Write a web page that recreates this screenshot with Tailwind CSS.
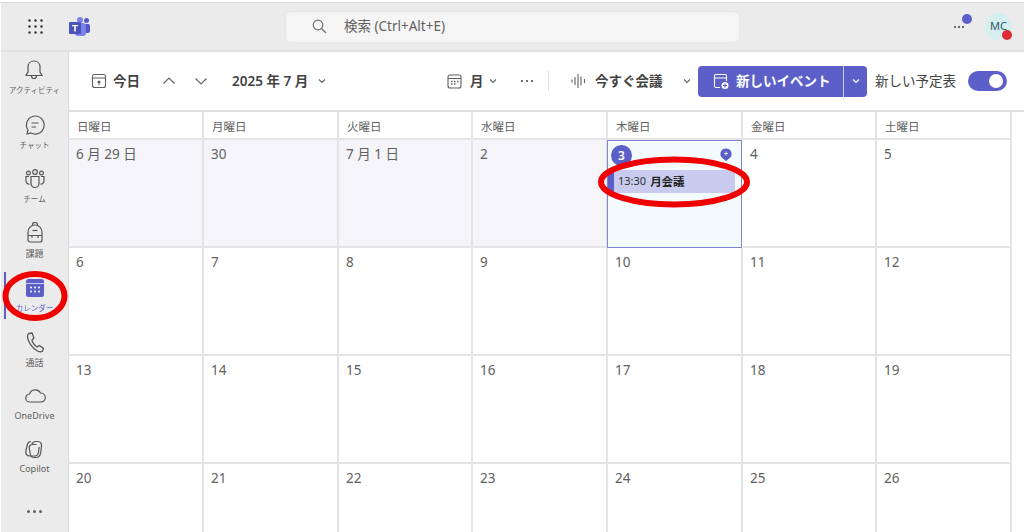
<!DOCTYPE html>
<html lang="ja"><head><meta charset="utf-8"><script src="https://cdn.jsdelivr.net/npm/@tailwindcss/browser@4"></script></head>
<body class="bg-white">
<div class="relative w-[1024px] h-[532px] overflow-hidden bg-white font-['Noto_Sans','Noto_Sans_CJK_JP',sans-serif] text-[#424242]">
  <div class="h-[3px] bg-white border-b border-[#dcdcdc]"></div>
  <header class="ml-px h-[49px] bg-[#ebebeb] flex items-center border-b-2 border-[#e0e0e0]">
    <svg class="shrink-0 ml-[27px] w-[15px] h-[15px]" viewBox="0 0 15 15" fill="#333"><circle cx="1.5" cy="1.5" r="1.2"/><circle cx="7.5" cy="1.5" r="1.2"/><circle cx="13.5" cy="1.5" r="1.2"/><circle cx="1.5" cy="7.5" r="1.2"/><circle cx="7.5" cy="7.5" r="1.2"/><circle cx="13.5" cy="7.5" r="1.2"/><circle cx="1.5" cy="13.5" r="1.2"/><circle cx="7.5" cy="13.5" r="1.2"/><circle cx="13.5" cy="13.5" r="1.2"/></svg>
    <svg class="shrink-0 ml-[26px] w-[21px] h-[20px]" viewBox="0 0 21 20"><circle cx="17.5" cy="3.5" r="2.5" fill="#5059c9"/><rect x="13" y="7" width="8" height="9" rx="2" fill="#5059c9"/><circle cx="11" cy="3" r="3" fill="#7b83eb"/><rect x="6" y="6" width="11" height="13" rx="3" fill="#7b83eb"/><rect x="0" y="5" width="12" height="12" rx="1" fill="#4b53bc"/><path d="M3 8h6v1.300H6.800V14.500H5.200V9.300H3z" fill="#fff"/></svg>
    <div class="shrink-0 ml-[195px] w-[455px] h-[32px] rounded-md bg-[#f5f5f5] border border-[#e6e6e6] flex items-center">
      <svg class="ml-[26px] w-[15px] h-[15px]" viewBox="0 0 15 15" fill="none" stroke="#707070" stroke-width="1.200"><circle cx="6" cy="6" r="4.800"/><path d="M9.500 9.500L14 14"/></svg>
      <span class="ml-[17px] text-[13.5px] text-[#616161]">検索 (Ctrl+Alt+E)</span>
    </div>
    <div class="shrink-0 relative ml-[212px] w-[14px] h-[14px] flex items-center justify-center gap-[2px]">
      <i class="w-[2px] h-[2px] rounded-full bg-[#424242]"></i><i class="w-[2px] h-[2px] rounded-full bg-[#424242]"></i><i class="w-[2px] h-[2px] rounded-full bg-[#424242]"></i>
      <span class="absolute left-[10px] top-[-6px] w-[10px] h-[10px] rounded-full bg-[#5b5fc7]"></span>
    </div>
    <div class="shrink-0 relative ml-[19px] w-[27px] h-[27px] rounded-full bg-[#d7eef0] flex items-center justify-center text-[11px] text-[#2c5a63]">MC
      <span class="absolute left-[17px] top-[17px] w-[10px] h-[10px] rounded-full bg-[#dc2b35]"></span>
    </div>
  </header>
  <div class="flex h-[480px]">
    <nav class="relative ml-px w-[67px] shrink-0 bg-[#ebebeb] flex flex-col items-center pt-[7px]">
      <div class="h-[55px] flex flex-col items-center gap-[4px]">
        <svg class="w-[22px] h-[22px]" viewBox="0 0 22 22" fill="none" stroke="#555" stroke-width="1.200"><path d="M11 2c-4 0-6 3-6 6v5l-2 3.500h16L17 13V8c0-3-2-6-6-6z"/><path d="M8.500 17a2.500 2.500 0 0 0 5 0"/></svg>
        <span class="text-[7.5px] leading-[11px] text-[#616161] whitespace-nowrap">アクティビティ</span></div>
      <div class="h-[54px] flex flex-col items-center gap-[4px]">
        <svg class="w-[22px] h-[22px]" viewBox="0 0 22 22" fill="none" stroke="#555" stroke-width="1.200"><path d="M11 2a9 9 0 1 1-4 17l-4 1 1-4a9 9 0 0 1 7-14z"/><path d="M7.500 9h7M7.500 13h4.500"/></svg>
        <span class="text-[7.5px] leading-[11px] text-[#616161]">チャット</span></div>
      <div class="h-[54px] flex flex-col items-center gap-[4px]">
        <svg class="w-[22px] h-[22px]" viewBox="0 0 22 22" fill="none" stroke="#555" stroke-width="1.200"><circle cx="11" cy="4" r="2.300"/><circle cx="4.500" cy="5" r="1.900"/><circle cx="17.500" cy="5" r="1.900"/><path d="M7 8.500h8v7a4 4 0 0 1-8 0z"/><path d="M5 8.500H2v4.500a3 3 0 0 0 3.500 3M17 8.500h3v4.500a3 3 0 0 1-3.500 3"/></svg>
        <span class="text-[7.5px] leading-[11px] text-[#616161]">チーム</span></div>
      <div class="h-[55px] flex flex-col items-center gap-[4px]">
        <svg class="w-[22px] h-[22px]" viewBox="0 0 22 22" fill="none" stroke="#555" stroke-width="1.200"><path d="M4 10a7 7 0 0 1 14 0v8a2 2 0 0 1-2 2H6a2 2 0 0 1-2-2z"/><path d="M8.500 4V2.500a2.500 2 0 0 1 5 0V4"/><path d="M8.500 8.500h5"/><path d="M4 13.500h14M8 13.500v2.500M14 13.500v2.500"/></svg>
        <span class="text-[9px] leading-[11px] text-[#616161]">課題</span></div>
      <div class="h-[54px] flex flex-col items-center gap-[4px]">
        <svg class="w-[22px] h-[22px]" viewBox="0 0 22 22"><rect x="2" y="2" width="18" height="18" rx="2.500" fill="#5b5fc7"/><rect x="2" y="6" width="18" height="1" fill="#c9cbef"/><g fill="#fff"><circle cx="7" cy="10.500" r="1"/><circle cx="11" cy="10.500" r="1"/><circle cx="15" cy="10.500" r="1"/><circle cx="7" cy="14.500" r="1"/><circle cx="11" cy="14.500" r="1"/><circle cx="15" cy="14.500" r="1"/></g></svg>
        <span class="text-[7.5px] leading-[11px] text-[#5b5fc7] whitespace-nowrap">カレンダー</span></div>
      <div class="h-[54px] flex flex-col items-center gap-[4px]">
        <svg class="w-[22px] h-[22px]" viewBox="0 0 22 22" fill="none" stroke="#555" stroke-width="1.300"><path d="M5 2.500l3-.5 2 5-2 2c0 2 3 6 5 7l2.500-1.500 4 3-1 2.500c-1 1-3 1-5 0C8 17 3.500 10 3.500 5.500c0-1.500.5-2.500 1.500-3z"/></svg>
        <span class="text-[9px] leading-[11px] text-[#616161]">通話</span></div>
      <div class="h-[54px] flex flex-col items-center gap-[3px]">
        <svg class="w-[22px] h-[22px]" viewBox="0 0 22 22" fill="none" stroke="#555" stroke-width="1.200"><path d="M6 17a4 4 0 0 1-.5-8 6 6 0 0 1 11-1 4.500 4.500 0 0 1 .5 9z"/></svg>
        <span class="text-[9px] leading-[11px] text-[#616161]">OneDrive</span></div>
      <div class="h-[54px] flex flex-col items-center gap-[2px]">
        <svg class="w-[22px] h-[22px]" viewBox="0 0 22 22" fill="none" stroke="#555" stroke-width="1.200"><path d="M8 2.500c-2 0-3.200 1.200-3.700 3L3 11.500c-.7 3 .5 5.500 3.500 5.500H12c2 0 3-1.300 3.300-3l1-6"/><path d="M9 5c.7-1.700 2-2.500 4-2.500h2c2.500 0 3.800 2.200 3.500 5l-.8 6c-.4 3-2 5-4.700 5h-2c-2 0-3.200-1-3.500-2.500L6.200 9c-.3-2 1.300-3.500 3.300-3.500h4"/></svg>
        <span class="text-[9px] leading-[11px] text-[#616161]">Copilot</span></div>
      <div class="mt-[17px] flex gap-[3px]"><i class="w-[3px] h-[3px] rounded-full bg-[#616161]"></i><i class="w-[3px] h-[3px] rounded-full bg-[#616161]"></i><i class="w-[3px] h-[3px] rounded-full bg-[#616161]"></i></div>
      <span class="absolute left-[3px] top-[220px] w-[2px] h-[47px] bg-[#5b5fc7]"></span>
    </nav>
    <main class="flex-1 border-l border-[#dcdcdc] bg-white flex flex-col min-w-0">
      <div class="h-[60px] shrink-0 flex items-center border-b-2 border-[#e0e0e0] text-[13.5px] font-semibold text-[#424242] *:shrink-0">
        <svg class="ml-[22px] w-[16px] h-[16px]" viewBox="0 0 16 16" fill="none" stroke="#616161" stroke-width="1.100"><rect x="1.500" y="1.500" width="13" height="13" rx="2"/><path d="M1.500 5h13M8 12V8M6.500 9.500L8 8l1.500 1.500"/></svg>
        <span class="ml-[6px] w-[28px]">今日</span>
        <svg class="ml-[21px] w-[14px] h-[14px]" viewBox="0 0 14 14" fill="none" stroke="#616161" stroke-width="1.100"><path d="M1.500 9.500L7 4l5.500 5.500"/></svg>
        <svg class="ml-[18px] w-[14px] h-[14px]" viewBox="0 0 14 14" fill="none" stroke="#616161" stroke-width="1.100"><path d="M1.500 4.500L7 10l5.500-5.500"/></svg>
        <span class="ml-[24px] w-[77px] whitespace-nowrap">2025 年 7 月</span>
        <svg class="ml-[8px] w-[10px] h-[10px]" viewBox="0 0 10 10" fill="none" stroke="#616161" stroke-width="1.100"><path d="M2 3.500L5 6.500l3-3"/></svg>
        <svg class="ml-[120px] w-[15px] h-[15px]" viewBox="0 0 15 15" fill="none" stroke="#616161" stroke-width="1.100"><rect x="1" y="1" width="13" height="13" rx="2"/><path d="M1 4.500h13"/><path d="M4 7.500h1.500M7 7.500h1.500M10 7.500h1.500M4 10h1.500M7 10h1.500" stroke-width="1.300"/></svg>
        <span class="ml-[8px] w-[15px]">月</span>
        <svg class="ml-[3px] w-[10px] h-[10px]" viewBox="0 0 10 10" fill="none" stroke="#616161" stroke-width="1.100"><path d="M2 3.500L5 6.500l3-3"/></svg>
        <div class="ml-[23px] flex gap-[3px]"><i class="w-[2px] h-[2px] rounded-full bg-[#424242]"></i><i class="w-[2px] h-[2px] rounded-full bg-[#424242]"></i><i class="w-[2px] h-[2px] rounded-full bg-[#424242]"></i></div>
        <i class="ml-[15px] w-px h-[20px] bg-[#e0e0e0]"></i>
        <svg class="ml-[22px] w-[15px] h-[16px]" viewBox="0 0 15 16" stroke="#616161" stroke-width="1.100"><path d="M1 6.500v3M4 4v8M7 1v14M10 3.500v9M13.500 6v4"/></svg>
        <span class="ml-[9px] w-[68px] whitespace-nowrap">今すぐ会議</span>
        <svg class="ml-[19px] w-[10px] h-[10px]" viewBox="0 0 10 10" fill="none" stroke="#616161" stroke-width="1.100"><path d="M2 3.500L5 6.500l3-3"/></svg>
        <div class="ml-[6px] w-[169px] h-[31px] rounded-[4px] bg-[#5b5fc7] text-white flex items-center">
          <svg class="ml-[15px] w-[16px] h-[16px]" viewBox="0 0 16 16" fill="none" stroke="#fff" stroke-width="1.100"><path d="M7 14.500H3a1.500 1.500 0 0 1-1.500-1.500V3A1.500 1.500 0 0 1 3 1.500h9A1.500 1.500 0 0 1 13.500 3v5M1.500 5h12"/><circle cx="12" cy="12.500" r="3.500" fill="#fff" stroke="none"/><path d="M12 10.500v4M10 12.500h4" stroke="#5b5fc7"/></svg>
          <span class="ml-[7px] w-[107px] whitespace-nowrap">新しいイベント</span>
          <i class="w-px h-[31px] bg-[#c8c9ee]"></i>
          <svg class="ml-[7px] w-[10px] h-[10px]" viewBox="0 0 10 10" fill="none" stroke="#fff" stroke-width="1.200"><path d="M2 3.500L5 6.500l3-3"/></svg>
        </div>
        <span class="ml-[8px] w-[81px] font-normal text-[#424242] whitespace-nowrap">新しい予定表</span>
        <div class="ml-[12px] w-[39px] h-[20px] rounded-full bg-[#5b5fc7] relative"><span class="absolute right-[4px] top-[3px] w-[14px] h-[14px] rounded-full bg-white"></span></div>
      </div>
      <div class="grid grid-cols-[135px_135px_134px_135px_135px_134px_135px_11px] grid-rows-[28px_108px_108px_108px_108px] text-[#616161]">
        <div class="h-[28px] border-r-2 border-b-2 border-[#e4e4e4] px-[8px] text-[11.5px] leading-[29px]">日曜日</div>
        <div class="h-[28px] border-r-2 border-b-2 border-[#e4e4e4] px-[8px] text-[11.5px] leading-[29px]">月曜日</div>
        <div class="h-[28px] border-r-2 border-b-2 border-[#e4e4e4] px-[8px] text-[11.5px] leading-[29px]">火曜日</div>
        <div class="h-[28px] border-r-2 border-b-2 border-[#e4e4e4] px-[8px] text-[11.5px] leading-[29px]">水曜日</div>
        <div class="h-[28px] border-r-2 border-b-2 border-[#e4e4e4] px-[8px] text-[11.5px] leading-[29px]">木曜日</div>
        <div class="h-[28px] border-r-2 border-b-2 border-[#e4e4e4] px-[8px] text-[11.5px] leading-[29px]">金曜日</div>
        <div class="h-[28px] border-r-2 border-b-2 border-[#e4e4e4] px-[8px] text-[11.5px] leading-[29px]">土曜日</div>
        <div></div>

        <div class="bg-[#f4f4f9] border-r-2 border-b-2 border-[#e4e4e4] pl-[7px] pt-[4px] text-[13.5px] leading-[20px]">6 月 29 日</div>
        <div class="bg-[#f4f4f9] border-r-2 border-b-2 border-[#e4e4e4] pl-[7px] pt-[4px] text-[13.5px] leading-[20px]">30</div>
        <div class="bg-[#f4f4f9] border-r-2 border-b-2 border-[#e4e4e4] pl-[7px] pt-[4px] text-[13.5px] leading-[20px]">7 月 1 日</div>
        <div class="bg-[#f4f4f9] border-r-2 border-b-2 border-[#e4e4e4] pl-[7px] pt-[4px] text-[13.5px] leading-[20px]">2</div>
        <div class="relative -ml-px mr-px bg-[#f3fbff] border border-[#8084d0] pl-[3px] pt-[4px]">
          <div class="w-[21px] h-[21px] rounded-full bg-[#5b5fc7] text-white text-[12px] font-semibold leading-[21px] text-center">3</div>
          <svg class="absolute right-[9px] top-[7px] w-[12px] h-[13px]" viewBox="0 0 12 13"><path d="M6 0.500a5.500 5.500 0 0 1 4 9.300L6 13 2 9.800A5.500 5.500 0 0 1 6 .5z" fill="#5b5fc7"/><path d="M6 3.500v4M4 5.500h4" stroke="#dfe0f6"/></svg>
          <div class="mt-[4px] ml-[-3px] w-[127px] h-[23px] bg-[#c8cbee] border-l-[6px] border-[#5b5fc7] rounded-[2px] flex items-center pl-[4px] text-[11px] text-[#323232] whitespace-nowrap">13:30<span class="ml-[4px] font-semibold text-[11.5px] text-[#242424]">月会議</span></div>
        </div>
        <div class="border-r-2 border-b-2 border-[#e4e4e4] pl-[7px] pt-[4px] text-[13.5px] leading-[20px] bg-white">4</div>
        <div class="border-r-2 border-b-2 border-[#e4e4e4] pl-[7px] pt-[4px] text-[13.5px] leading-[20px] bg-white">5</div>
        <div></div>

        <div class="border-r-2 border-b-2 border-[#e4e4e4] pl-[7px] pt-[4px] text-[13.5px] leading-[20px] bg-white">6</div>
        <div class="border-r-2 border-b-2 border-[#e4e4e4] pl-[7px] pt-[4px] text-[13.5px] leading-[20px] bg-white">7</div>
        <div class="border-r-2 border-b-2 border-[#e4e4e4] pl-[7px] pt-[4px] text-[13.5px] leading-[20px] bg-white">8</div>
        <div class="border-r-2 border-b-2 border-[#e4e4e4] pl-[7px] pt-[4px] text-[13.5px] leading-[20px] bg-white">9</div>
        <div class="border-r-2 border-b-2 border-[#e4e4e4] pl-[7px] pt-[4px] text-[13.5px] leading-[20px] bg-white">10</div>
        <div class="border-r-2 border-b-2 border-[#e4e4e4] pl-[7px] pt-[4px] text-[13.5px] leading-[20px] bg-white">11</div>
        <div class="border-r-2 border-b-2 border-[#e4e4e4] pl-[7px] pt-[4px] text-[13.5px] leading-[20px] bg-white">12</div>
        <div></div>

        <div class="border-r-2 border-b-2 border-[#e4e4e4] pl-[7px] pt-[4px] text-[13.5px] leading-[20px] bg-white">13</div>
        <div class="border-r-2 border-b-2 border-[#e4e4e4] pl-[7px] pt-[4px] text-[13.5px] leading-[20px] bg-white">14</div>
        <div class="border-r-2 border-b-2 border-[#e4e4e4] pl-[7px] pt-[4px] text-[13.5px] leading-[20px] bg-white">15</div>
        <div class="border-r-2 border-b-2 border-[#e4e4e4] pl-[7px] pt-[4px] text-[13.5px] leading-[20px] bg-white">16</div>
        <div class="border-r-2 border-b-2 border-[#e4e4e4] pl-[7px] pt-[4px] text-[13.5px] leading-[20px] bg-white">17</div>
        <div class="border-r-2 border-b-2 border-[#e4e4e4] pl-[7px] pt-[4px] text-[13.5px] leading-[20px] bg-white">18</div>
        <div class="border-r-2 border-b-2 border-[#e4e4e4] pl-[7px] pt-[4px] text-[13.5px] leading-[20px] bg-white">19</div>
        <div></div>

        <div class="border-r-2 border-[#e4e4e4] pl-[7px] pt-[4px] text-[13.5px] leading-[20px] bg-white">20</div>
        <div class="border-r-2 border-[#e4e4e4] pl-[7px] pt-[4px] text-[13.5px] leading-[20px] bg-white">21</div>
        <div class="border-r-2 border-[#e4e4e4] pl-[7px] pt-[4px] text-[13.5px] leading-[20px] bg-white">22</div>
        <div class="border-r-2 border-[#e4e4e4] pl-[7px] pt-[4px] text-[13.5px] leading-[20px] bg-white">23</div>
        <div class="border-r-2 border-[#e4e4e4] pl-[7px] pt-[4px] text-[13.5px] leading-[20px] bg-white">24</div>
        <div class="border-r-2 border-[#e4e4e4] pl-[7px] pt-[4px] text-[13.5px] leading-[20px] bg-white">25</div>
        <div class="border-r-2 border-[#e4e4e4] pl-[7px] pt-[4px] text-[13.5px] leading-[20px] bg-white">26</div>
        <div></div>
      </div>
    </main>
  </div>
  <svg class="absolute left-0 top-0 w-[1024px] h-[532px] pointer-events-none" viewBox="0 0 1024 532" fill="none" stroke="#f00000" stroke-width="6"><ellipse cx="35" cy="296" rx="29.500" ry="22"/><ellipse cx="674" cy="182" rx="73" ry="22.500"/></svg>
</div>
</body></html>
